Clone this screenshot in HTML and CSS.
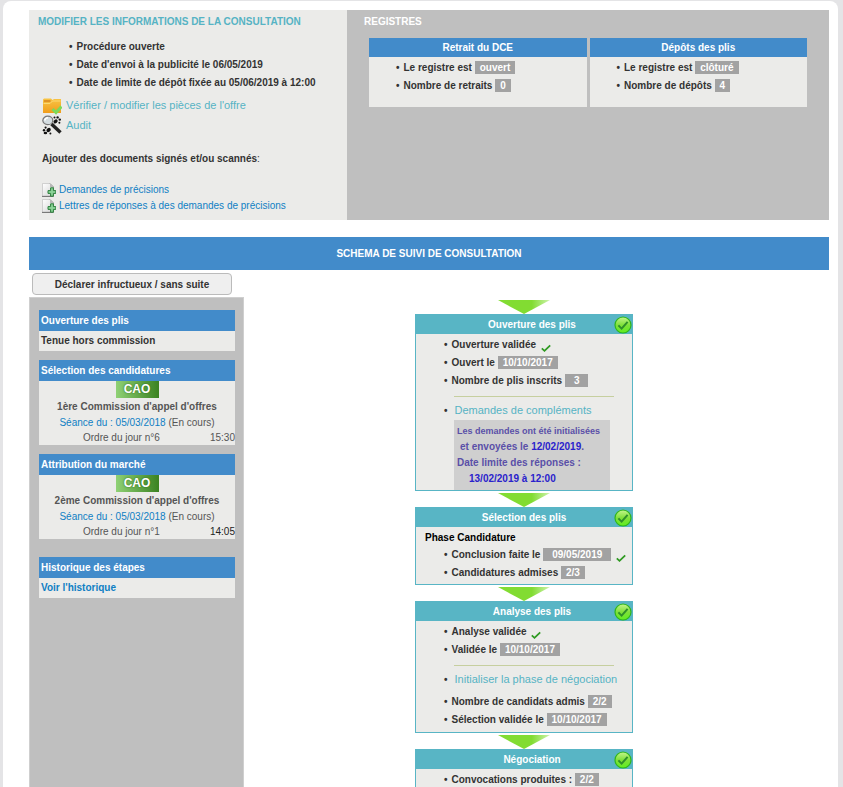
FILE: index.html
```html
<!DOCTYPE html>
<html lang="fr">

<head>
    <meta charset="UTF-8">
    <meta name="viewport" content="width=device-width, initial-scale=1.0">
    <title>Suivi de consultation</title>
    <link rel="stylesheet" href="styles.css">
</head>
<body>
    <svg class="defs" width="0" height="0">
        <defs>
            <linearGradient id="fade" x1="0" x2="1" y1="0" y2="0">
                <stop offset="0.65" stop-color="#82dc32" />
                <stop offset="1" stop-color="#cdf3ac" />
            </linearGradient>
            <linearGradient id="ball" x1="0" x2="0" y1="0" y2="1">
                <stop offset="0" stop-color="#c4f58c" />
                <stop offset="0.5" stop-color="#7fe03a" />
                <stop offset="1" stop-color="#5fee20" />
            </linearGradient>
            <linearGradient id="folder" x1="0" x2="0" y1="0" y2="1">
                <stop offset="0" stop-color="#f8c545" />
                <stop offset="1" stop-color="#f09d1c" />
            </linearGradient>
            <linearGradient id="sheet" x1="0" x2="1" y1="0" y2="1">
                <stop offset="0" stop-color="#ffffff" />
                <stop offset="1" stop-color="#d4d4d4" />
            </linearGradient>
            <symbol id="arrow" viewBox="0 0 52 14">
                <path d="M0 0H52L26 14Z" fill="url(#fade)" />
            </symbol>
            <symbol id="done" viewBox="0 0 18 18">
                <circle cx="9" cy="9" r="8" fill="url(#ball)" stroke="#2fb51c" stroke-width="1.2" />
                <path d="M4.4 9.4L7.6 12.6L13.6 5.8" fill="none" stroke="#2f8f2a" stroke-width="2" />
            </symbol>
            <symbol id="tick" viewBox="0 0 10 8">
                <path d="M0.8 4.4L3.5 6.8L9.2 1.4" fill="none" stroke="#2f9a22" stroke-width="1.8" />
            </symbol>
            <symbol id="doc" viewBox="0 0 14 14">
                <path d="M0.5 0.5H8L11.5 4V13.3H0.5Z" fill="url(#sheet)" stroke="#c2c2c2" stroke-width="0.7" />
                <path d="M0 13.4H11.5" stroke="#6e6e6e" />
                <path d="M8 0.5L11.5 4V13" fill="none" stroke="#8f8f8f" stroke-width="0.8" />
                <path d="M8 0.5V4H11.5Z" fill="#b8b8b8" />
                <path d="M8.6 4.8H11.4V7.6H13.8V10.4H11.4V13.2H8.6V10.4H6V7.6H8.6Z" fill="#8bd398" stroke="#2c7f3c" />
            </symbol>
        </defs>
    </svg>
    <div class="page">
        <div class="top">
            <div class="infos">
                <h2 class="heading">MODIFIER LES INFORMATIONS DE LA CONSULTATION</h2>
                <ul class="list">
                    <li>Procédure ouverte</li>
                    <li>Date d'envoi à la publicité le 06/05/2019</li>
                    <li>Date de limite de dépôt fixée au 05/06/2019 à 12:00</li>
                </ul>
                <a class="tool" href="#">
                    <svg class="tool-icon" viewBox="0 0 20 20">
                        <path d="M1 4.5L2 3.5H9L10.5 5L12 4H19V18H1Z" fill="url(#folder)" />
                        <path d="M1.5 8.5H8L10.5 6H18.5" fill="none" stroke="#fbd873" />
                        <path d="M2 6H8.5" stroke="#d5811d" stroke-width="1.4" />
                        <path d="M10.5 14L14 17.5L19.5 11.5" fill="none" stroke="#7ed957" stroke-width="3" />
                    </svg>
                    Vérifier / modifier les pièces de l'offre
                </a>
                <a class="tool" href="#">
                    <svg class="tool-icon" viewBox="0 0 20 20">
                        <path d="M9.5 9L18.5 17.5" stroke="#222" stroke-width="3.4" />
                        <ellipse cx="5.8" cy="5.4" rx="5" ry="4.2" fill="#d4dde1" stroke="#777" stroke-width="1.2" />
                        <path d="M2.6 5.5Q3.2 3 6 2.8" fill="none" stroke="#fff" stroke-width="1.6" />
                        <g fill="#111">
                            <ellipse cx="13.6" cy="6.4" rx="2.3" ry="1.7" transform="rotate(-40 13.6 6.4)" />
                            <circle cx="12.5" cy="2.6" r="1" />
                            <circle cx="15.6" cy="2.4" r="1.2" />
                            <circle cx="17.8" cy="4.6" r="1.2" />
                            <circle cx="17.4" cy="7.8" r="1" />
                            <ellipse cx="6.6" cy="15" rx="2.4" ry="1.8" transform="rotate(-40 6.6 15)" />
                            <ellipse cx="3.4" cy="18" rx="1.8" ry="1.3" />
                            <circle cx="2" cy="15.2" r="1.2" />
                            <circle cx="3.6" cy="12.6" r="1.1" />
                            <circle cx="8.4" cy="18.4" r="1" />
                        </g>
                    </svg>
                    Audit
                </a>
                <p class="add"><b>Ajouter des documents signés et/ou scannés</b>:</p>
                <a class="doc" href="#"><svg class="doc-icon"><use href="#doc" /></svg>Demandes de précisions</a>
                <a class="doc" href="#"><svg class="doc-icon"><use href="#doc" /></svg>Lettres de réponses à des demandes de précisions</a>
            </div>
            <div class="registres">
                <h2 class="heading">REGISTRES</h2>
                <div class="boxes">
                    <div class="box">
                        <h3 class="box-title">Retrait du DCE</h3>
                        <ul class="list">
                            <li>Le registre est <span class="badge">ouvert</span></li>
                            <li>Nombre de retraits <span class="badge">0</span></li>
                        </ul>
                    </div>
                    <div class="box">
                        <h3 class="box-title">Dépôts des plis</h3>
                        <ul class="list">
                            <li>Le registre est <span class="badge">clôturé</span></li>
                            <li>Nombre de dépôts <span class="badge">4</span></li>
                        </ul>
                    </div>
                </div>
            </div>
        </div>

        <h1 class="banner">SCHEMA DE SUIVI DE CONSULTATION</h1>

        <div class="content">
            <div class="side">
                <button class="button" type="button">Déclarer infructueux / sans suite</button>
                <div class="sidebar">
                    <div class="card">
                        <h3 class="card-title">Ouverture des plis</h3>
                        <p class="card-text">Tenue hors commission</p>
                    </div>
                    <div class="card">
                        <h3 class="card-title">Sélection des candidatures</h3>
                        <span class="cao">CAO</span>
                        <p class="commission">1ère Commission d'appel d'offres</p>
                        <p class="seance"><a href="#">Séance du : 05/03/2018</a> (En cours)</p>
                        <p class="ordre"><span>Ordre du jour n°6</span><span>15:30</span></p>
                    </div>
                    <div class="card">
                        <h3 class="card-title">Attribution du marché</h3>
                        <span class="cao">CAO</span>
                        <p class="commission">2ème Commission d'appel d'offres</p>
                        <p class="seance"><a href="#">Séance du : 05/03/2018</a> (En cours)</p>
                        <p class="ordre"><span>Ordre du jour n°1</span><span class="dark">14:05</span></p>
                    </div>
                    <div class="card history">
                        <h3 class="card-title">Historique des étapes</h3>
                        <p class="card-text"><a href="#">Voir l'historique</a></p>
                    </div>
                </div>
            </div>

            <div class="schema">
                <svg class="arrow"><use href="#arrow" /></svg>
                <div class="step">
                    <h3 class="step-title shifted"><span>Ouverture des plis</span><svg class="done"><use href="#done" /></svg></h3>
                    <ul class="list">
                        <li>Ouverture validée <svg class="tick"><use href="#tick" /></svg></li>
                        <li>Ouvert le <span class="badge">10/10/2017</span></li>
                        <li>Nombre de plis inscrits <span class="badge wide">3</span></li>
                    </ul>
                    <hr class="line">
                    <ul class="list">
                        <li class="action"><a href="#">Demandes de compléments</a></li>
                    </ul>
                    <div class="note">
                        <p class="small">Les demandes ont été initialisées</p>
                        <p class="indent">et envoyées le <b>12/02/2019</b>.</p>
                        <p>Date limite des réponses :</p>
                        <p class="indent2"><b>13/02/2019 à 12:00</b></p>
                    </div>
                </div>
                <svg class="arrow"><use href="#arrow" /></svg>
                <div class="step">
                    <h3 class="step-title"><span>Sélection des plis</span><svg class="done"><use href="#done" /></svg></h3>
                    <h4 class="phase">Phase Candidature</h4>
                    <ul class="list tight">
                        <li>Conclusion faite le <span class="badge wide">09/05/2019</span> <svg class="tick"><use href="#tick" /></svg></li>
                        <li>Candidatures admises <span class="badge">2/3</span></li>
                    </ul>
                </div>
                <svg class="arrow"><use href="#arrow" /></svg>
                <div class="step">
                    <h3 class="step-title shifted"><span>Analyse des plis</span><svg class="done"><use href="#done" /></svg></h3>
                    <ul class="list">
                        <li>Analyse validée <svg class="tick"><use href="#tick" /></svg></li>
                        <li>Validée le <span class="badge">10/10/2017</span></li>
                    </ul>
                    <hr class="line">
                    <ul class="list roomy">
                        <li class="action"><a href="#">Initialiser la phase de négociation</a></li>
                        <li>Nombre de candidats admis <span class="badge">2/2</span></li>
                        <li>Sélection validée le <span class="badge">10/10/2017</span></li>
                    </ul>
                </div>
                <svg class="arrow"><use href="#arrow" /></svg>
                <div class="step last">
                    <h3 class="step-title shifted"><span>Négociation</span><svg class="done"><use href="#done" /></svg></h3>
                    <ul class="list">
                        <li>Convocations produites : <span class="badge">2/2</span></li>
                    </ul>
                </div>
            </div>
        </div>
    </div>
</body>
</html>
```
FILE: styles.css
```css
* {
    margin: 0;
    padding: 0;
    box-sizing: border-box;
}
body {
    background-color: #e4e4e6;
    font-family: "Liberation Sans", Arial, sans-serif;
    font-size: 10px;
    line-height: 18px;
    color: #333;
}
a {
    color: #0f7fc4;
    text-decoration: none;
}
h1,
h2,
h3,
h4 {
    font-size: 10px;
}
.defs {
    position: absolute;
}
.page {
    display: flex;
    flex-direction: column;
    min-height: 100vh;
    margin: 1px 5px 0 3px;
    padding: 9px 9px 0 26px;
    background-color: white;
    border-radius: 8px 8px 0 0;
}
.top {
    display: grid;
    grid-template-columns: 318fr 482fr;
    min-height: 210px;
}
.infos {
    padding: 3px 9px;
    background-color: #ebebe9;
}
.infos .heading {
    color: #56b3c4;
}
.infos .list {
    padding: 7px 0 3px 31px;
}
.list {
    list-style: none;
    font-weight: bold;
}
.list li::before {
    content: "•";
    margin-right: 4px;
}
.tool {
    display: flex;
    align-items: center;
    gap: 4px;
    height: 20px;
    padding-left: 4px;
    font-size: 11px;
    color: #56b3c4;
}
.tool-icon {
    width: 20px;
    height: 20px;
}
.add {
    padding: 15px 0 14px 4px;
}
.doc {
    display: flex;
    align-items: center;
    gap: 3px;
    height: 16px;
    padding-left: 4px;
}
.doc-icon {
    width: 14px;
    height: 14px;
}
.registres {
    padding: 3px 22px;
    background-color: #bfbfbf;
}
.registres .heading {
    margin-left: -5px;
    color: white;
}
.boxes {
    display: grid;
    grid-template-columns: 1fr 1fr;
    gap: 3px;
    margin-top: 7px;
}
.box {
    min-height: 69px;
    background-color: #ebebe9;
}
.box .list {
    padding: 2px 0 0 27px;
}
.box-title {
    line-height: 19px;
    background-color: #428bca;
    color: white;
    text-align: center;
}
.badge {
    display: inline-block;
    padding: 0 5px;
    line-height: 13px;
    background-color: #a2a2a2;
    color: white;
}
.wide {
    padding: 0 9px;
}
.banner {
    margin-top: 17px;
    line-height: 33px;
    background-color: #428bca;
    color: white;
    text-align: center;
}
.content {
    display: flex;
    flex: 1;
}
.side {
    display: flex;
    flex-direction: column;
    width: 215px;
}
.button {
    width: 200px;
    height: 22px;
    margin: 3px 0 2px 3px;
    border: 1px solid #bbb;
    border-radius: 4px;
    background-color: #efefef;
    font: bold 10px "Liberation Sans", Arial, sans-serif;
    color: #333;
}
.sidebar {
    flex: 1;
    padding: 12px 8px 10px 9px;
    border: 1px solid #cfcfcf;
    border-bottom: none;
    background-color: #bfbfbf;
}
.card {
    margin-bottom: 9px;
    background-color: #ebebe9;
    color: #555;
    text-align: center;
}
.history {
    margin-top: 18px;
}
.card-title {
    padding-left: 2px;
    line-height: 21px;
    background-color: #428bca;
    color: white;
    text-align: left;
}
.card-text {
    padding-left: 2px;
    line-height: 20px;
    font-weight: bold;
    color: #333;
    text-align: left;
}
.cao {
    display: block;
    width: 43px;
    margin: 0 auto;
    line-height: 17px;
    background: linear-gradient(90deg, #8fd175, #3b8221);
    font-size: 12px;
    font-weight: bold;
    color: white;
    text-shadow: 0 0 2px #2d6a18;
}
.commission {
    padding-top: 1px;
    line-height: 16px;
    font-weight: bold;
}
.seance {
    line-height: 15px;
}
.ordre {
    display: flex;
    justify-content: space-between;
    padding-left: 44px;
    line-height: 15px;
}
.dark {
    color: #222;
}
.schema {
    display: flex;
    flex: 1;
    flex-direction: column;
    align-items: center;
    padding: 28px 25px 0 0;
}
.arrow {
    flex: none;
    width: 52px;
    height: 14px;
    margin: 2px 0 0;
}
.step {
    width: 218px;
    border: 1px solid #58b5c5;
    background-color: #ebebe9;
}
.step-title {
    display: flex;
    align-items: center;
    height: 19px;
    padding-left: 18px;
    background-color: #58b5c5;
    color: white;
    text-align: center;
}
.shifted {
    padding-left: 34px;
}
.step-title span {
    flex: 1;
}
.done {
    width: 18px;
    height: 18px;
}
.step .list {
    padding: 2px 0 0 28px;
}
.step .tight {
    padding: 0 0 2px 28px;
}
.step .roomy {
    padding-bottom: 3px;
}
.step .action a {
    font-size: 11px;
    font-weight: normal;
    color: #56b3c4;
}
.action a {
    margin-left: 3px;
}
.action + li {
    margin-top: 4px;
}
.line {
    width: 160px;
    margin: 6px 0 2px 38px;
    border: none;
    border-top: 1px solid #c6cf9f;
}
.note {
    width: 156px;
    margin-left: 38px;
    padding: 3px 0 3px 3px;
    background-color: #cfcfcf;
    line-height: 16px;
    font-weight: bold;
    color: #5a50a8;
    white-space: nowrap;
}
.note b {
    color: #2a22cc;
}
.small {
    font-size: 9px;
}
.indent {
    padding-left: 3px;
}
.indent2 {
    padding-left: 12px;
}
.tick {
    width: 10px;
    height: 8px;
    margin-left: 2px;
    vertical-align: -4px;
}
.phase {
    padding: 3px 0 0 9px;
    line-height: 16px;
    color: black;
}
.last {
    padding-bottom: 10px;
}
```
